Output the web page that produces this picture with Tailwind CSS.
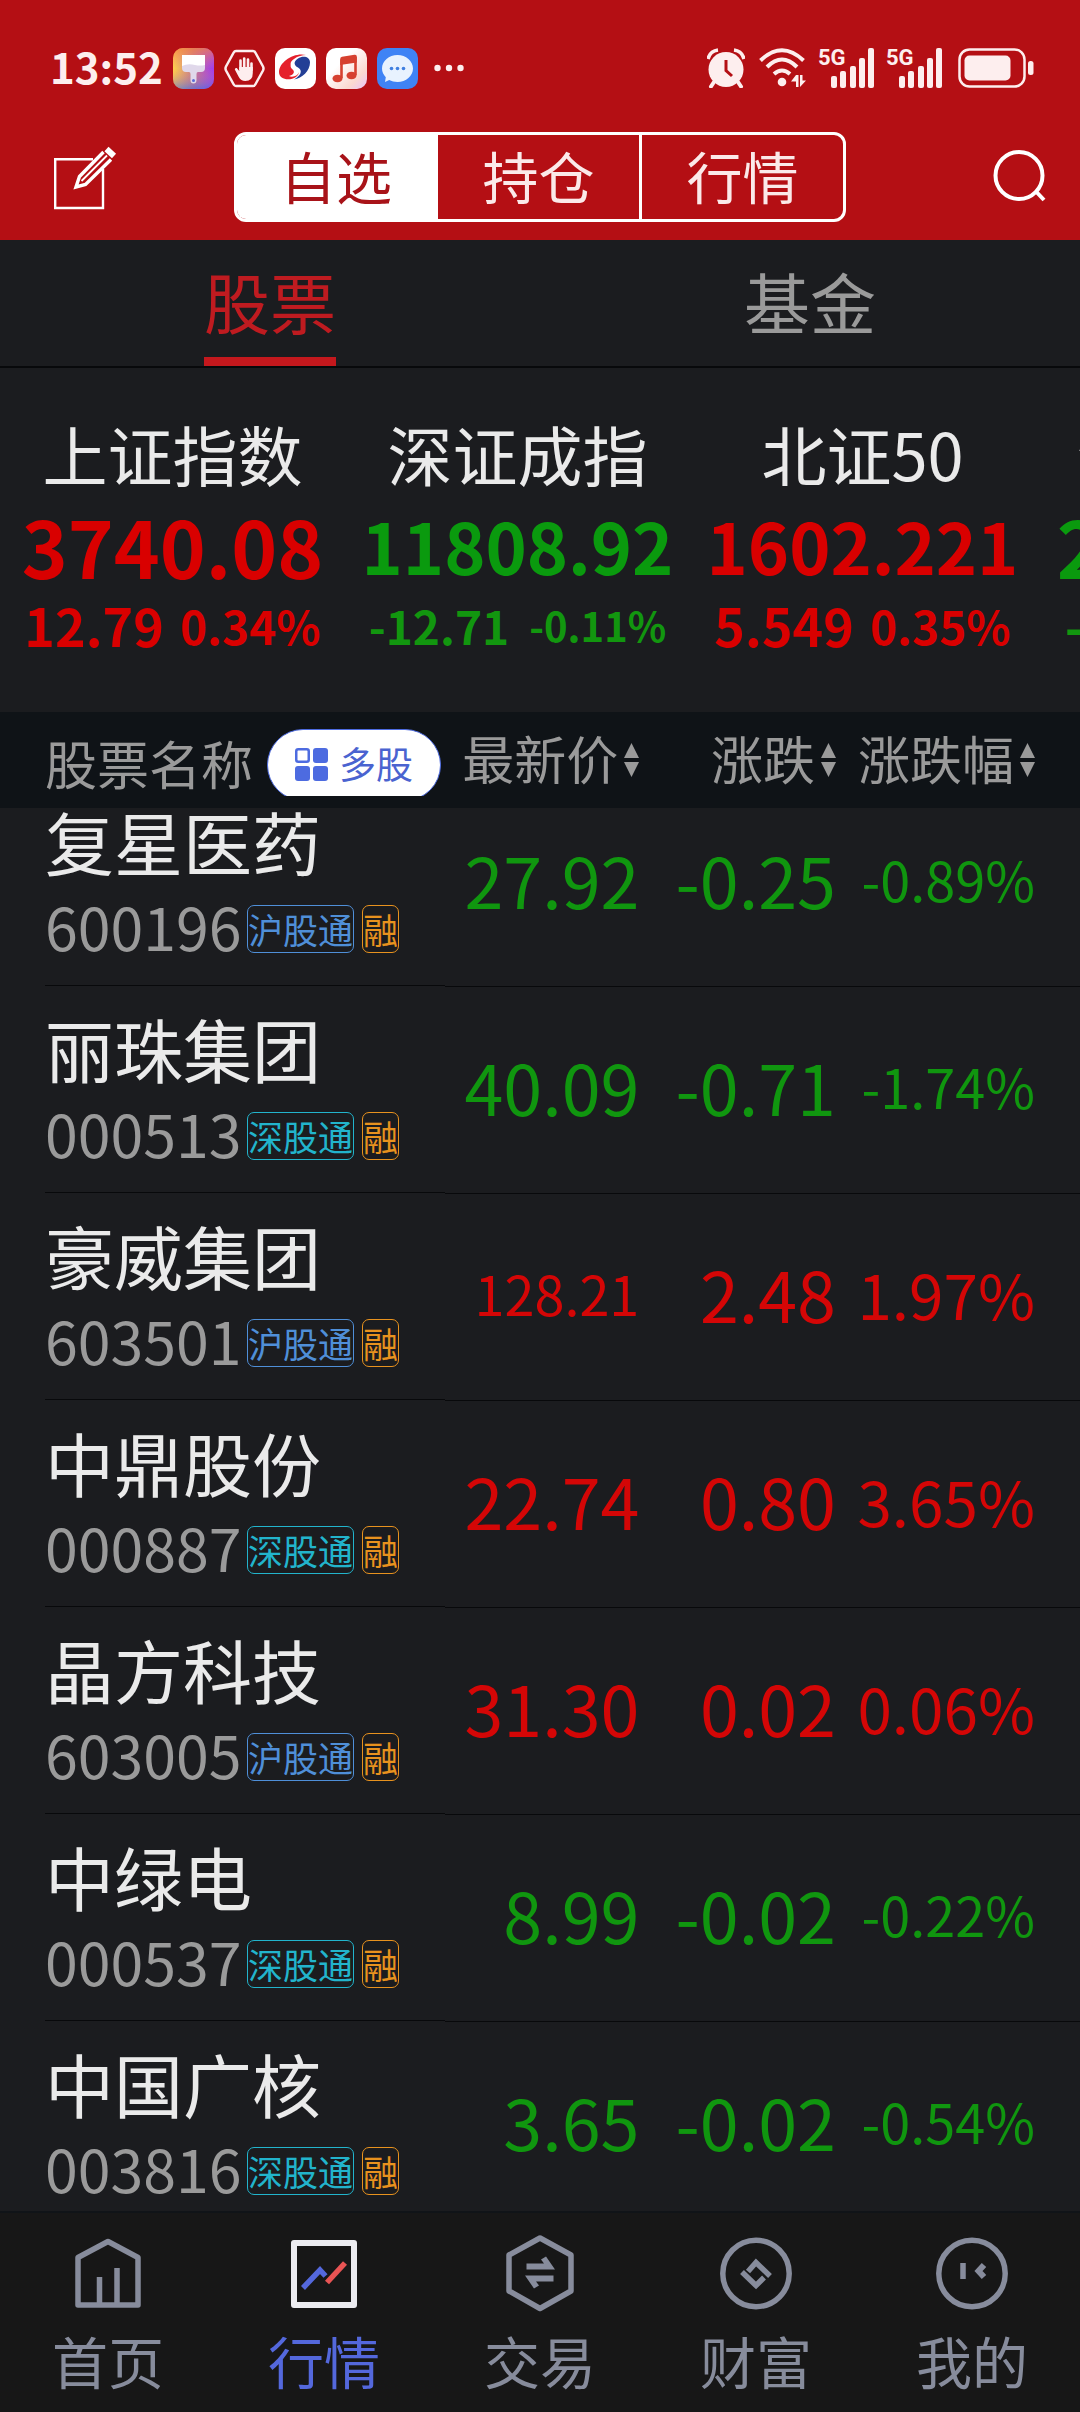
<!DOCTYPE html>
<html lang="zh-CN">
<head>
<meta charset="utf-8">
<meta name="viewport" content="width=device-width, initial-scale=1">
<title>自选股票</title>
<script src="https://cdn.jsdelivr.net/npm/@tailwindcss/browser@4"></script>
</head>
<body class="flex h-dvh flex-col overflow-hidden bg-[#1b1c1f] font-['Noto_Sans_CJK_SC',sans-serif] text-[#eaeaea]">

<!-- Shared symbols -->
<svg class="hidden" aria-hidden="true">
  <symbol id="sort" viewBox="0 0 15 34"><path d="M7.500 0 15 15H0zM0 19h15L7.500 34z" fill="#9a9a9a"/></symbol>
  <symbol id="signal" viewBox="0 0 57 40">
    <g fill="#fdeeee"><rect x="13" y="28" width="6" height="12" rx="2"/><rect x="22" y="23" width="6" height="17" rx="2"/><rect x="32" y="18" width="6" height="22" rx="2"/><rect x="41" y="10" width="6" height="30" rx="2"/><rect x="50" y="0" width="6" height="40" rx="2"/></g>
  </symbol>
</svg>

<header class="bg-[#b40f14]">
  <!-- Status bar -->
  <div class="flex h-[132px] items-center pl-[50px] pr-[46px] pt-1">
    <span class="w-[123px] pb-1 text-[42px] leading-[48px] font-bold text-[#fdeeee]">13:52</span>
    <div class="flex items-center gap-[10px]">
      <svg class="size-[41px]" viewBox="0 0 41 41">
        <defs>
          <linearGradient id="pa" x1="0" y1="0" x2="1" y2="0"><stop offset="0" stop-color="#ffd24a"/><stop offset=".5" stop-color="#c77a8a"/><stop offset="1" stop-color="#a03cf0"/></linearGradient>
          <linearGradient id="pb" x1="0" y1="0" x2="0" y2="1"><stop offset="0" stop-color="#f5803c" stop-opacity=".7"/><stop offset=".5" stop-color="#f58080" stop-opacity="0"/><stop offset="1" stop-color="#3c6cf0" stop-opacity=".6"/></linearGradient>
        </defs>
        <rect width="41" height="41" rx="10" fill="url(#pa)"/><rect width="41" height="41" rx="10" fill="url(#pb)"/>
        <path d="M9 7h23v13q0 4-4 4h-3q-1.500 0-1.500 2v6a3 3.500 0 0 1-6 0v-6q0-2-1.500-2h-3q-4 0-4-4z" fill="#e0d8ea"/><path d="M9 7h23v10q-5 1-10 0-7-2-13 1z" fill="#fff"/><circle cx="20.500" cy="32.500" r="1.500" fill="#5a6cd8"/>
      </svg>
      <svg class="size-[41px]" viewBox="0 0 41 41" fill="none">
        <path d="M12 3h17q1.500 0 2.300 1.500L39 18.500q1 2 0 4L31.300 36.500Q30.500 38 29 38H12q-1.500 0-2.300-1.500L2 22.500q-1-2 0-4L9.700 4.500Q10.500 3 12 3z" stroke="#fdeeee" stroke-width="2.500"/>
        <path d="M16.500 21V12.500M20.200 20V10.500M24 20V11.500M27.500 22V15.500" stroke="#fdeeee" stroke-width="2.600" stroke-linecap="round"/>
        <path d="M15.200 19h13.600v6q0 8-7.500 8-4.500 0-6.500-4l-4-7.500q0-2 2-1.500l2.400 3z" fill="#fdeeee"/>
      </svg>
      <svg class="size-[41px]" viewBox="0 0 41 41">
        <rect width="41" height="41" rx="10" fill="#fff"/>
        <path d="M31 7C19 4 4 14 4 24c0 8 11 9 17 5 5-4 2-7-2-9s-5-6 0-9c4-3 8-4 12-4z" fill="#e5202c"/>
        <path d="M23 10.500c5-3 12-2 12 4 0 8-8 16-16 17 7-4 9-9 4-12-4-2-5-6 0-9z" fill="#233f96"/>
        <path d="M22 11c-5 2.500-6 6-1 8.500 4 2 4 5 1 7.500-3 2-6 2-8 1 4-1 7-4 3-7-3-3-1-8 5-10z" fill="#fff"/>
      </svg>
      <svg class="size-[41px]" viewBox="0 0 41 41">
        <defs><linearGradient id="mu" x1="0" y1="0" x2="1" y2="1"><stop offset=".35" stop-color="#fff"/><stop offset=".75" stop-color="#fbd9d0"/><stop offset="1" stop-color="#e9c4fa"/></linearGradient></defs>
        <rect width="41" height="41" rx="10" fill="url(#mu)"/>
        <path d="M14.200 11q0-1.800 1.800-2.200l12.500-2q2.300-.3 2.300 1.800v6L14.200 17z" fill="#d6402f"/><path d="M15.500 11.500V30M29.500 9v18" stroke="#d6402f" stroke-width="2.600"/><ellipse cx="11.500" cy="30.500" rx="5" ry="3.800" fill="#d6402f"/><ellipse cx="25.500" cy="27.500" rx="5" ry="3.800" fill="#d6402f"/>
      </svg>
      <svg class="size-[41px]" viewBox="0 0 41 41">
        <rect width="41" height="41" rx="10" fill="#3f83f5"/>
        <path d="M20.500 7C29 7 36 13 36 20.500S29 34 20.500 34c-3 0-6-.7-8.300-2L8 34l.8-4.800C6.500 26.800 5 24 5 20.500 5 13 12 7 20.500 7z" fill="#e8f2fe"/>
        <g fill="#3f7fe0"><circle cx="14.500" cy="20.500" r="1.800"/><circle cx="20.500" cy="20.500" r="1.800"/><circle cx="26.500" cy="20.500" r="1.800"/></g>
      </svg>
      <svg class="ml-[6px] h-[8px] w-[30px]" viewBox="0 0 30 8" fill="#fdeeee"><circle cx="3.500" cy="4" r="3.200"/><circle cx="15" cy="4" r="3.200"/><circle cx="26.500" cy="4" r="3.200"/></svg>
    </div>
    <div class="ml-auto flex items-center">
      <svg class="mr-[14px] h-[40px] w-[38px]" viewBox="0 0 38 40">
        <circle cx="19" cy="21.500" r="17.500" fill="#fdeeee"/><path d="M7 34 4 38.500M31 34l3 4.500" stroke="#fdeeee" stroke-width="4" stroke-linecap="round"/>
        <path d="M1 11Q3 3 11 2M37 11Q35 3 27 2" stroke="#fdeeee" stroke-width="3.500" fill="none"/><path d="M19 12v10.500l6 5.500" stroke="#b40f14" stroke-width="3" fill="none"/>
      </svg>
      <svg class="mr-[11px] h-[40px] w-[48px]" viewBox="0 0 48 40">
        <g fill="none" stroke="#fdeeee" stroke-width="4"><path d="M1.500 12.500Q23 -8 44.500 12.500"/><path d="M8 19Q23 4 38 19"/><path d="M15 26q8-7 16 0"/></g><circle cx="23" cy="34" r="4.300" fill="#fdeeee"/>
        <path d="M37 27v12h2.500V27zM37 27l-5 6.500h5zM41 27v12l6-6.500h-3.500V27z" fill="#fdeeee"/>
      </svg>
      <div class="relative mr-[11px] h-[40px] w-[57px]"><svg class="h-[40px] w-[57px]"><use href="#signal"/></svg><span class="absolute top-0 left-0 font-['Roboto',sans-serif] text-[22px] leading-[20px] font-bold text-[#fdeeee]">5G</span></div>
      <div class="relative mr-[15px] h-[40px] w-[57px]"><svg class="h-[40px] w-[57px]"><use href="#signal"/></svg><span class="absolute top-0 left-0 font-['Roboto',sans-serif] text-[22px] leading-[20px] font-bold text-[#fdeeee]">5G</span></div>
      <svg class="h-[40px] w-[76px]" viewBox="0 0 76 40"><rect x="1.500" y="1.500" width="65" height="37" rx="10" fill="none" stroke="#fdeeee" stroke-width="2.500"/><rect x="6.500" y="7.500" width="46" height="25" rx="5" fill="#fdeeee"/><rect x="70" y="13" width="5.500" height="14" rx="2.500" fill="#fdeeee"/></svg>
    </div>
  </div>

  <!-- Title bar -->
  <div class="grid h-[108px] grid-cols-[1fr_auto_1fr] items-start px-[34px]">
    <button class="mt-[14px] ml-[20px] justify-self-start" aria-label="编辑">
      <svg class="h-[64px] w-[63px]" viewBox="0 0 63 64" fill="none" stroke="#fff">
        <path d="M39 13.200H1.200V62H49V23" stroke-width="2.400"/>
        <path d="M49.500 6 25.500 30.500 22 41 31.500 38.500 57 13.500" stroke-width="3.400"/><path d="M53 9.500 27.500 35" stroke-width="1.800"/><path d="M52.500 3 60 10" stroke-width="6"/>
      </svg>
    </button>
    <nav class="flex h-[90px] divide-x-3 divide-white overflow-hidden rounded-[12px] border-3 border-white text-[56px] leading-[80px] text-[#fbe9e9]" aria-label="视图">
      <button class="w-[201px] bg-white pb-[6px] text-[#a81319]">自选</button>
      <button class="w-[204px] pb-[6px]">持仓</button>
      <button class="w-[201px] pb-[6px]">行情</button>
    </nav>
    <button class="mt-[16px] justify-self-end" aria-label="搜索">
      <svg class="h-[56px] w-[54px]" viewBox="0 0 54 56" fill="none" stroke="#fff" stroke-width="4"><circle cx="27" cy="27.500" r="23.500"/><path d="M44 43.500 52 52"/></svg>
    </button>
  </div>
</header>

<main class="flex min-h-0 flex-1 flex-col overflow-hidden">
  <nav class="grid h-[128px] shrink-0 grid-cols-2 border-b-2 border-[#08090b] text-[66px] leading-[120px]" aria-label="类别">
    <a href="#" class="mx-auto h-[126px] border-b-9 border-[#c4181d] text-[#bf1b20]">股票</a>
    <a href="#" class="mx-auto h-[126px] text-[#9a9a9a]">基金</a>
  </nav>

  <!-- Index ticker -->
  <section class="flex h-[344px] shrink-0 overflow-hidden pt-[49px] whitespace-nowrap" aria-label="指数">
    <article class="w-[345px] shrink-0 text-center">
      <h2 class="text-[65px] leading-[72px]">上证指数</h2>
      <p class="mt-2 text-[78px] leading-[96px] font-bold text-[#d90000]">3740.08</p>
      <p class="flex items-center justify-center gap-4 leading-[64px] font-bold text-[#d90000]"><span class="text-[52px]">12.79</span><span class="text-[46px]">0.34%</span></p>
    </article>
    <article class="w-[345px] shrink-0 text-center">
      <h2 class="text-[65px] leading-[72px]">深证成指</h2>
      <p class="mt-2 text-[70px] leading-[96px] font-bold text-[#0a9a0e]">11808.92</p>
      <p class="flex items-center justify-center gap-5 leading-[64px] font-bold text-[#12960f]"><span class="text-[46px]">-12.71</span><span class="text-[40px]">-0.11%</span></p>
    </article>
    <article class="w-[345px] shrink-0 text-center">
      <h2 class="text-[65px] leading-[72px]">北证50</h2>
      <p class="mt-2 text-[70px] leading-[96px] font-bold text-[#d90000]">1602.221</p>
      <p class="flex items-center justify-center gap-4 leading-[64px] font-bold text-[#d90000]"><span class="text-[52px]">5.549</span><span class="text-[46px]">0.35%</span></p>
    </article>
    <article class="w-[345px] shrink-0 text-center">
      <h2 class="text-[65px] leading-[72px]">创业板指</h2>
      <p class="mt-2 text-[78px] leading-[96px] font-bold text-[#0a9a0e]">2601.74</p>
      <p class="flex items-center justify-center gap-5 leading-[64px] font-bold text-[#12960f]"><span class="text-[52px]">-4.46</span><span class="text-[40px]">-0.17%</span></p>
    </article>
  </section>

  <!-- Watchlist -->
  <table class="w-full table-fixed border-collapse whitespace-nowrap">
    <colgroup><col class="w-[41.200%]"><col class="w-[18%]"><col class="w-[18.200%]"><col class="w-[22.600%]"></colgroup>
    <thead class="bg-[#0f1317] text-[52px] text-[#9a9a9a]">
      <tr>
        <th class="p-0 font-normal">
          <div class="flex h-[96px] items-start pl-[45px]">
            <span class="mt-[15px] leading-[72px]">股票名称</span>
            <div class="mt-[17px] ml-[14px] h-[67px] overflow-hidden">
              <button class="flex h-[72px] w-[174px] items-center justify-center gap-[10px] rounded-full border border-[#4d6be0] bg-white text-[37px] leading-[64px] text-[#4a63d0]">
                <svg class="size-[34px]" viewBox="0 0 34 34"><g fill="#4d6be0"><rect x="18" width="15" height="15" rx="3"/><rect y="18" width="15" height="15" rx="3"/><rect x="18" y="18" width="15" height="15" rx="3"/></g><rect x="1.250" y="1.250" width="12.500" height="12.500" rx="2" fill="none" stroke="#4d6be0" stroke-width="2.500"/></svg>
                <span class="pb-[4px]">多股</span>
              </button>
            </div>
          </div>
        </th>
        <th class="p-0 font-normal"><button class="flex h-[96px] w-full items-center justify-end gap-[6px]"><span class="pb-[4px]">最新价</span><svg class="h-[34px] w-[15px]"><use href="#sort"/></svg></button></th>
        <th class="p-0 font-normal"><button class="flex h-[96px] w-full items-center justify-end gap-[6px]"><span class="pb-[4px]">涨跌</span><svg class="h-[34px] w-[15px]"><use href="#sort"/></svg></button></th>
        <th class="p-0 pr-[45px] font-normal"><button class="flex h-[96px] w-full items-center justify-end gap-[6px]"><span class="pb-[4px]">涨跌幅</span><svg class="h-[34px] w-[15px]"><use href="#sort"/></svg></button></th>
      </tr>
    </thead>
    <tbody class="text-right align-bottom text-[70px] leading-[88px]">
      <tr class="text-[#10960f]">
        <td class="p-0"><div class="ml-[45px] flex h-[178px] flex-col justify-end border-b border-[#08090b] pb-8 text-left text-[#eaeaea]">
          <div class="text-[69px] leading-[64px]">复星医药</div>
          <div class="mt-[31px] flex h-[49px] items-center text-[35px] leading-[46px]"><span class="w-[202px] pb-[6px] text-[59px] text-[#9a9a9a]">600196</span><span class="rounded-[7px] border border-[#4f8fd8] text-[#4f8fd8]">沪股通</span><span class="ml-2 rounded-[7px] border border-[#e8921e] text-[#e8921e]">融</span></div>
        </div></td>
        <td class="border-b border-[#08090b] p-0 pb-[63px]">27.92</td>
        <td class="border-b border-[#08090b] p-0 pb-[63px]">-0.25</td>
        <td class="border-b border-[#08090b] p-0 pr-[45px] pb-[63px] text-[54px]">-0.89%</td>
      </tr>
      <tr class="text-[#10960f]">
        <td class="p-0"><div class="ml-[45px] flex h-[207px] flex-col justify-end border-b border-[#08090b] pb-8 text-left text-[#eaeaea]">
          <div class="text-[69px] leading-[64px]">丽珠集团</div>
          <div class="mt-[31px] flex h-[49px] items-center text-[35px] leading-[46px]"><span class="w-[202px] pb-[6px] text-[59px] text-[#9a9a9a]">000513</span><span class="rounded-[7px] border border-[#22b4cc] text-[#22b4cc]">深股通</span><span class="ml-2 rounded-[7px] border border-[#e8921e] text-[#e8921e]">融</span></div>
        </div></td>
        <td class="border-b border-[#08090b] p-0 pb-[63px]">40.09</td>
        <td class="border-b border-[#08090b] p-0 pb-[63px]">-0.71</td>
        <td class="border-b border-[#08090b] p-0 pr-[45px] pb-[63px] text-[54px]">-1.74%</td>
      </tr>
      <tr class="text-[#d40606]">
        <td class="p-0"><div class="ml-[45px] flex h-[207px] flex-col justify-end border-b border-[#08090b] pb-8 text-left text-[#eaeaea]">
          <div class="text-[69px] leading-[64px]">豪威集团</div>
          <div class="mt-[31px] flex h-[49px] items-center text-[35px] leading-[46px]"><span class="w-[202px] pb-[6px] text-[59px] text-[#9a9a9a]">603501</span><span class="rounded-[7px] border border-[#4f8fd8] text-[#4f8fd8]">沪股通</span><span class="ml-2 rounded-[7px] border border-[#e8921e] text-[#e8921e]">融</span></div>
        </div></td>
        <td class="border-b border-[#08090b] p-0 pb-[63px] text-[54px]">128.21</td>
        <td class="border-b border-[#08090b] p-0 pb-[63px]">2.48</td>
        <td class="border-b border-[#08090b] p-0 pr-[45px] pb-[63px] text-[62px]">1.97%</td>
      </tr>
      <tr class="text-[#d40606]">
        <td class="p-0"><div class="ml-[45px] flex h-[207px] flex-col justify-end border-b border-[#08090b] pb-8 text-left text-[#eaeaea]">
          <div class="text-[69px] leading-[64px]">中鼎股份</div>
          <div class="mt-[31px] flex h-[49px] items-center text-[35px] leading-[46px]"><span class="w-[202px] pb-[6px] text-[59px] text-[#9a9a9a]">000887</span><span class="rounded-[7px] border border-[#22b4cc] text-[#22b4cc]">深股通</span><span class="ml-2 rounded-[7px] border border-[#e8921e] text-[#e8921e]">融</span></div>
        </div></td>
        <td class="border-b border-[#08090b] p-0 pb-[63px]">22.74</td>
        <td class="border-b border-[#08090b] p-0 pb-[63px]">0.80</td>
        <td class="border-b border-[#08090b] p-0 pr-[45px] pb-[63px] text-[62px]">3.65%</td>
      </tr>
      <tr class="text-[#d40606]">
        <td class="p-0"><div class="ml-[45px] flex h-[207px] flex-col justify-end border-b border-[#08090b] pb-8 text-left text-[#eaeaea]">
          <div class="text-[69px] leading-[64px]">晶方科技</div>
          <div class="mt-[31px] flex h-[49px] items-center text-[35px] leading-[46px]"><span class="w-[202px] pb-[6px] text-[59px] text-[#9a9a9a]">603005</span><span class="rounded-[7px] border border-[#4f8fd8] text-[#4f8fd8]">沪股通</span><span class="ml-2 rounded-[7px] border border-[#e8921e] text-[#e8921e]">融</span></div>
        </div></td>
        <td class="border-b border-[#08090b] p-0 pb-[63px]">31.30</td>
        <td class="border-b border-[#08090b] p-0 pb-[63px]">0.02</td>
        <td class="border-b border-[#08090b] p-0 pr-[45px] pb-[63px] text-[62px]">0.06%</td>
      </tr>
      <tr class="text-[#10960f]">
        <td class="p-0"><div class="ml-[45px] flex h-[207px] flex-col justify-end border-b border-[#08090b] pb-8 text-left text-[#eaeaea]">
          <div class="text-[69px] leading-[64px]">中绿电</div>
          <div class="mt-[31px] flex h-[49px] items-center text-[35px] leading-[46px]"><span class="w-[202px] pb-[6px] text-[59px] text-[#9a9a9a]">000537</span><span class="rounded-[7px] border border-[#22b4cc] text-[#22b4cc]">深股通</span><span class="ml-2 rounded-[7px] border border-[#e8921e] text-[#e8921e]">融</span></div>
        </div></td>
        <td class="border-b border-[#08090b] p-0 pb-[63px]">8.99</td>
        <td class="border-b border-[#08090b] p-0 pb-[63px]">-0.02</td>
        <td class="border-b border-[#08090b] p-0 pr-[45px] pb-[63px] text-[54px]">-0.22%</td>
      </tr>
      <tr class="text-[#10960f]">
        <td class="p-0"><div class="ml-[45px] flex h-[207px] flex-col justify-end border-b border-[#08090b] pb-8 text-left text-[#eaeaea]">
          <div class="text-[69px] leading-[64px]">中国广核</div>
          <div class="mt-[31px] flex h-[49px] items-center text-[35px] leading-[46px]"><span class="w-[202px] pb-[6px] text-[59px] text-[#9a9a9a]">003816</span><span class="rounded-[7px] border border-[#22b4cc] text-[#22b4cc]">深股通</span><span class="ml-2 rounded-[7px] border border-[#e8921e] text-[#e8921e]">融</span></div>
        </div></td>
        <td class="border-b border-[#08090b] p-0 pb-[63px]">3.65</td>
        <td class="border-b border-[#08090b] p-0 pb-[63px]">-0.02</td>
        <td class="border-b border-[#08090b] p-0 pr-[45px] pb-[63px] text-[54px]">-0.54%</td>
      </tr>
    </tbody>
  </table>
</main>

<!-- Bottom navigation -->
<nav class="grid h-[201px] shrink-0 grid-cols-5 border-t-2 border-[#101418] bg-[#171717] text-[56px] leading-[80px] text-[#878c9c]" aria-label="主导航">
  <a href="#" class="flex flex-col items-center gap-[6px] pt-[21px]">
    <svg class="size-[80px]" viewBox="0 0 80 80" fill="none" stroke="#878c9c" stroke-width="5.500" stroke-linejoin="round"><path d="M10 23.500 40 7.500l30 16V71H10z"/><path d="M31.500 71V43M49 71V34"/></svg>
    <span>首页</span>
  </a>
  <a href="#" class="flex flex-col items-center gap-[6px] pt-[21px] text-[#5468dc]" aria-current="page">
    <svg class="size-[80px]" viewBox="0 0 80 80" fill="none" stroke-width="5.500"><rect x="10" y="9" width="60" height="62" stroke="#ececf0" stroke-width="6" stroke-linejoin="round"/><path d="M19 54 36 36l5.500 6" stroke="#5468dc"/><path d="M43 48.500 61 29" stroke="#e85454"/></svg>
    <span>行情</span>
  </a>
  <a href="#" class="flex flex-col items-center gap-[6px] pt-[21px]">
    <svg class="size-[80px]" viewBox="0 0 80 80" fill="none" stroke="#878c9c" stroke-width="5.500" stroke-linejoin="round"><path d="M40 4 71 21v36L40 74.500 9 57V21z"/><path d="M26.500 29.500H44l-3-4 5-3 9 13H26.500zM53.500 47.500H36l3 4-5 3-9-13h28.500z" fill="#878c9c" stroke="none"/></svg>
    <span>交易</span>
  </a>
  <a href="#" class="flex flex-col items-center gap-[6px] pt-[21px]">
    <svg class="size-[80px]" viewBox="0 0 80 80" fill="none" stroke="#878c9c" stroke-width="5.500"><circle cx="40" cy="39.500" r="33.200"/><path d="M32 37.500 40 28.500l14 13.500M48 43.500 40 51.500 26 38"/></svg>
    <span>财富</span>
  </a>
  <a href="#" class="flex flex-col items-center gap-[6px] pt-[21px]">
    <svg class="size-[80px]" viewBox="0 0 80 80" fill="none" stroke="#878c9c" stroke-width="5.500"><circle cx="40" cy="39.500" r="33.200"/><path d="M31 29v16"/><path d="M52 31l-5.500 6 5.500 6" stroke-width="6"/></svg>
    <span>我的</span>
  </a>
</nav>
</body>
</html>
